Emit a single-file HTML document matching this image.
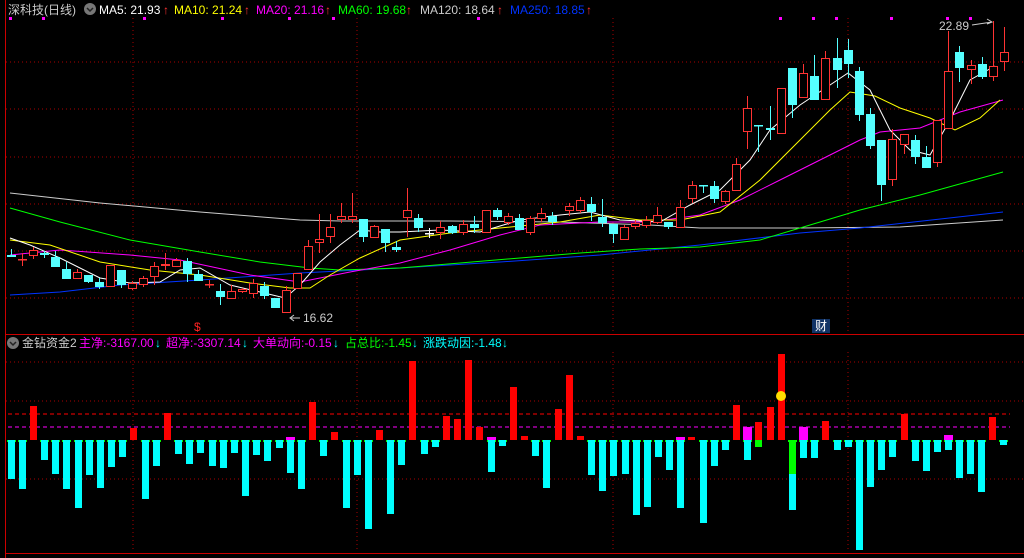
<!DOCTYPE html>
<html><head><meta charset="utf-8"><style>
html,body{margin:0;padding:0;background:#000;width:1024px;height:558px;overflow:hidden}
svg{display:block}
text{font-family:"Liberation Sans","Noto Sans CJK SC",sans-serif;font-size:12px}
</style></head><body>
<svg id="s" width="1024" height="558" viewBox="0 0 1024 558" xmlns="http://www.w3.org/2000/svg">
<rect width="1024" height="558" fill="#000"/>
<g stroke="#a00" stroke-width="1" stroke-dasharray="1,3">
<line x1="6" y1="62" x2="1024" y2="62"/><line x1="6" y1="109" x2="1024" y2="109"/>
<line x1="6" y1="157" x2="1024" y2="157"/><line x1="6" y1="204" x2="1024" y2="204"/>
<line x1="6" y1="251" x2="1024" y2="251"/><line x1="6" y1="298" x2="1024" y2="298"/>
<line x1="133" y1="18" x2="133" y2="333"/><line x1="357" y1="18" x2="357" y2="333"/>
<line x1="613" y1="18" x2="613" y2="333"/><line x1="848" y1="18" x2="848" y2="333"/>
<line x1="6" y1="362" x2="1024" y2="362"/><line x1="6" y1="401" x2="1024" y2="401"/>
<line x1="6" y1="479" x2="1024" y2="479"/>
<line x1="133" y1="352" x2="133" y2="552"/><line x1="357" y1="352" x2="357" y2="552"/>
<line x1="613" y1="352" x2="613" y2="552"/><line x1="848" y1="352" x2="848" y2="552"/>
</g>
<line x1="5.5" y1="0" x2="5.5" y2="558" stroke="#c00"/>
<line x1="5" y1="334.5" x2="1024" y2="334.5" stroke="#c00"/>
<line x1="5" y1="553.5" x2="1024" y2="553.5" stroke="#c00"/>
<line x1="8" y1="414" x2="1010" y2="414" stroke="#f00" stroke-dasharray="4,3"/>
<line x1="8" y1="427" x2="1010" y2="427" stroke="#f0f" stroke-dasharray="4,3"/>
<g id="lines" fill="none" stroke-width="1"></g>
<g id="candles"></g>
<g id="bars"></g>
<circle cx="781" cy="396" r="5" fill="#fd0"/>
<!-- header -->
<text x="8" y="14" fill="#ccc">深科技(日线)</text>
<circle cx="90" cy="9" r="6" fill="#777"/><path d="M87 8l3 3 3-3" stroke="#222" stroke-width="1.5" fill="none"/>
<text x="99" y="14" fill="#fff">MA5: 21.93</text><text x="163" y="14" fill="#f33">↑</text>
<text x="174" y="14" fill="#ff0">MA10: 21.24</text><text x="244" y="14" fill="#f33">↑</text>
<text x="256" y="14" fill="#f0f">MA20: 21.16</text><text x="325" y="14" fill="#f33">↑</text>
<text x="338" y="14" fill="#0f0">MA60: 19.68</text><text x="406" y="14" fill="#f33">↑</text>
<text x="420" y="14" fill="#ccc">MA120: 18.64</text><text x="497" y="14" fill="#f33">↑</text>
<text x="510" y="14" fill="#03f">MA250: 18.85</text><text x="586" y="14" fill="#f33">↑</text>
<g fill="#f0f"><rect x="9" y="17" width="3" height="3"/><rect x="42" y="17" width="3" height="3"/><rect x="143" y="17" width="3" height="3"/><rect x="221" y="17" width="3" height="3"/><rect x="288" y="17" width="3" height="3"/><rect x="332" y="17" width="3" height="3"/><rect x="477" y="17" width="3" height="3"/><rect x="779" y="17" width="3" height="3"/><rect x="812" y="17" width="3" height="3"/><rect x="835" y="17" width="3" height="3"/><rect x="890" y="17" width="3" height="3"/><rect x="946" y="17" width="3" height="3"/><rect x="969" y="17" width="3" height="3"/></g>
<text x="939" y="30" fill="#ccc">22.89</text><path d="M972 25 L992 22 M987 19l5 3-5 2" stroke="#ccc" fill="none"/>
<text x="303" y="322" fill="#ccc">16.62</text><path d="M300 318 H290 M294 315l-4 3 4 3" stroke="#ccc" fill="none"/>
<text x="194" y="331" fill="#f22" font-size="11">$</text>
<rect x="812" y="319" width="18" height="14" fill="#136"/><text x="815" y="330" fill="#fff" font-size="11">财</text>
<!-- sub header -->
<circle cx="13" cy="343" r="6" fill="#777"/><path d="M10 342l3 3 3-3" stroke="#222" stroke-width="1.5" fill="none"/>
<text x="22" y="347" fill="#ccc">金钻资金2</text>
<text x="79" y="347" fill="#f0f">主净:-3167.00</text><text x="155" y="347" fill="#0ff">↓</text>
<text x="166" y="347" fill="#f0f">超净:-3307.14</text><text x="242" y="347" fill="#0ff">↓</text>
<text x="253" y="347" fill="#f0f">大单动向:-0.15</text><text x="333" y="347" fill="#0ff">↓</text>
<text x="345" y="347" fill="#0f0">占总比:-1.45</text><text x="412" y="347" fill="#0ff">↓</text>
<text x="423" y="347" fill="#0ff">涨跌动因:-1.48</text><text x="502" y="347" fill="#0ff">↓</text>
</svg>
<script>
var NS="http://www.w3.org/2000/svg";
function el(p,t,a){var e=document.createElementNS(NS,t);for(var k in a)e.setAttribute(k,a[k]);document.getElementById(p).appendChild(e);return e;}
var L=[
["#ccc","10,193 100,203 200,212 300,220 340,221 450,221 560,222 650,225 700,228 800,228 900,227 1003,220"],
["#03f","10,295 60,292 120,285 200,280 300,273 400,268 500,262 600,255 700,245 800,233 860,228 1003,212"],
["#0f0","10,208 60,222 130,240 200,252 260,262 310,268 340,270 400,268 460,263 520,258 580,253 640,249 700,247 760,240 800,228 860,210 920,195 1003,172"],
["#f0f","10,255 60,250 130,255 180,260 250,275 300,282 350,272 400,263 450,250 500,235 540,225 600,222 650,222 700,215 740,200 780,180 820,160 860,140 880,132 920,128 960,112 1003,100"],
["#ff0","10,240 50,245 100,262 150,270 200,275 250,283 290,288 310,288 330,275 360,258 400,240 450,233 500,228 560,222 600,215 640,220 680,220 720,212 760,180 800,140 830,110 850,92 875,96 900,108 930,118 955,130 980,118 1000,100"],
["#fff","10,238 30,245 60,258 100,278 130,283 160,282 180,270 200,268 230,285 260,292 285,298 300,285 320,262 340,245 360,230 380,232 400,232 440,230 480,232 520,220 560,215 590,212 620,220 660,222 690,205 720,190 750,160 770,130 800,105 830,85 848,73 870,90 890,130 910,150 930,155 950,120 970,80 995,66"]];
L.forEach(function(l){el("lines","polyline",{points:l[1],stroke:l[0]});});
// x, bodyTop, bodyBot, high, low, up
var C=[[11,255,257,249,257,0],[22,259,259,253,266,1],[33,250,256,247,259,1],[44,253,255,251,258,0],[55,257,267,251,267,0],[66,269,279,262,279,0],[77,272,279,269,279,1],[88,275,282,275,283,0],[99,282,287,278,289,0],[110,265,287,265,287,1],[121,270,285,270,288,0],[132,283,289,281,290,1],[143,278,285,276,287,1],[154,266,277,262,285,1],[165,264,266,253,270,1],[176,260,267,258,267,1],[187,261,274,258,282,0],[198,274,281,270,281,0],[209,284,284,280,288,1],[220,291,297,284,305,0],[231,291,299,285,299,1],[242,289,292,288,293,1],[253,283,294,279,298,1],[264,286,296,282,299,0],[275,298,308,298,308,0],[286,290,313,286,313,1],[297,273,289,273,289,1],[308,246,270,240,270,1],[319,239,243,214,253,1],[330,227,237,214,243,1],[341,216,220,203,223,1],[352,216,220,193,223,1],[363,219,237,219,242,0],[374,226,238,225,238,1],[385,229,243,229,252,0],[396,247,250,241,252,0],[407,210,218,188,237,1],[418,218,228,214,232,0],[429,233,233,228,238,2],[440,227,233,221,239,1],[452,226,233,225,234,0],[463,224,233,220,235,1],[474,224,228,216,233,0],[486,210,233,210,233,1],[497,210,217,208,220,0],[508,216,223,213,225,1],[519,218,230,214,230,0],[530,218,233,216,235,1],[541,213,219,208,222,1],[552,216,222,212,225,0],[569,206,211,203,216,1],[580,200,211,197,213,1],[591,204,212,197,221,0],[602,217,223,199,227,0],[613,224,234,224,243,0],[624,227,240,225,240,1],[635,223,227,220,229,1],[646,220,226,216,228,1],[657,215,223,207,224,1],[668,222,227,222,229,0],[680,207,228,200,228,1],[692,185,199,181,203,1],[703,185,185,185,193,0],[714,186,199,181,203,0],[725,191,202,190,204,1],[736,164,191,158,191,1],[747,108,132,96,149,1],[758,125,125,125,152,0],[770,128,130,106,140,0],[781,88,134,88,134,1],[792,68,105,68,118,0],[803,73,98,64,98,1],[814,76,100,55,100,0],[825,58,100,51,100,1],[837,58,70,38,88,0],[848,50,64,39,78,0],[859,71,115,67,121,0],[870,114,146,108,149,0],[881,140,185,140,201,0],[892,139,180,129,186,1],[904,134,145,134,154,1],[915,140,157,135,164,0],[926,157,168,146,168,0],[937,120,163,120,167,1],[948,71,129,31,129,1],[959,52,68,46,82,0],[971,65,70,60,84,1],[982,64,77,57,79,0],[993,66,77,21,81,1],[1004,52,62,27,71,1]];
C.forEach(function(c){var x=c[0],col=c[5]==1?"#f33":(c[5]==2?"#fff":"#5ff");
el("candles","line",{x1:x+0.5,y1:c[3],x2:x+0.5,y2:c[4],stroke:col});
var h=Math.max(c[2]-c[1],1);
if(c[5]==1){ if(h<=1) el("candles","rect",{x:x-4,y:c[1],width:9,height:1.5,fill:col}); else el("candles","rect",{x:x-3.5,y:c[1]+0.5,width:8,height:h-1,fill:"#000",stroke:col});}
else el("candles","rect",{x:x-4,y:c[1],width:9,height:h<=1?1.5:h,fill:col});});
var B=[[8,"c",479],[19,"c",489],[30,"r",406],[41,"c",460],[52,"c",474],[63,"c",489],[75,"c",508],[86,"c",475],[97,"c",488],[108,"c",467],[119,"c",457],[130,"r",428],[142,"c",499],[153,"c",466],[164,"r",413],[175,"c",454],[186,"c",464],[197,"c",453],[209,"c",466],[220,"c",468],[231,"c",453],[242,"c",496],[253,"c",455],[264,"c",461],[276,"c",448],[287,"m",473],[298,"c",489],[309,"r",402],[320,"c",456],[331,"r",432],[343,"c",508],[354,"c",475],[365,"c",529],[376,"r",430],[387,"c",514],[398,"c",465],[409,"r",361],[421,"c",454],[432,"c",447],[443,"r",416],[454,"r",419],[465,"r",360],[476,"r",427],[488,"m",472],[499,"c",446],[510,"r",387],[521,"r",436],[532,"c",456],[543,"c",488],[555,"r",409],[566,"r",375],[577,"r",436],[588,"c",475],[599,"c",491],[610,"c",476],[622,"c",474],[633,"c",515],[644,"c",507],[655,"c",457],[666,"c",470],[677,"m",508],[688,"r",437],[700,"c",523],[711,"c",466],[722,"c",450],[733,"r",405],[744,"M",460,427],[755,"r",422],[767,"r",407],[778,"r",354],[789,"c",510],[800,"M",458,427],[811,"c",458],[822,"r",421],[834,"c",450],[845,"c",447],[856,"c",550],[867,"c",487],[878,"c",470],[889,"c",457],[901,"r",414],[912,"c",461],[923,"c",471],[934,"c",452],[945,"M",450,435],[956,"c",478],[967,"c",474],[978,"c",492],[989,"r",417],[1000,"c",445]];
B.forEach(function(b){var x=b[0];
if(b[1]=="r"){el("bars","rect",{x:x,y:b[2],width:7,height:440-b[2],fill:"#f00"});}
else{ if(b[1]=="m") el("bars","rect",{x:x-1,y:437,width:9,height:3,fill:"#f0f"});
 if(b[1]=="M") el("bars","rect",{x:x-1,y:b[3],width:9,height:440-b[3],fill:"#f0f"});
 el("bars","rect",{x:x-1,y:440,width:9,height:2,fill:"#0f0"});
 el("bars","rect",{x:x,y:440,width:7,height:b[2]-440,fill:"#0ff"});}});
el("bars","rect",{x:755,y:440,width:7,height:7,fill:"#0f0"});
el("bars","rect",{x:789,y:440,width:7,height:34,fill:"#0f0"});
</script>
</body></html>
